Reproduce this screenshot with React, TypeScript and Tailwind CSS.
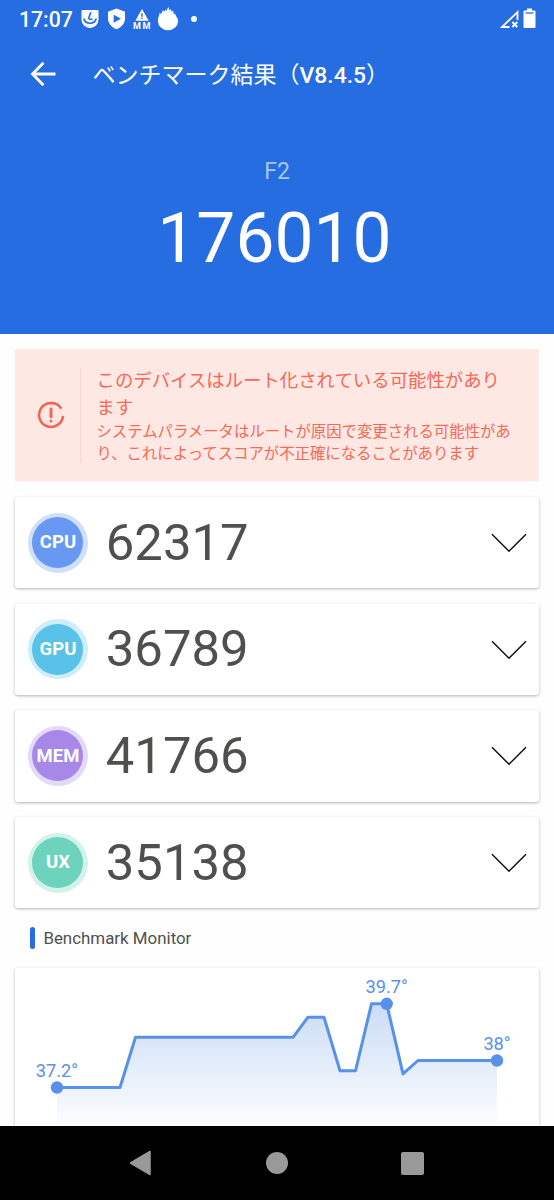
import React from 'react'

interface Score {
  label: string
  value: number
  ring: string
  fill: string
}

const scores: Score[] = [
  { label: 'CPU', value: 62317, ring: 'bg-[#d0dffa]', fill: 'bg-[#6799f2]' },
  { label: 'GPU', value: 36789, ring: 'bg-[#cdedf8]', fill: 'bg-[#59c2e9]' },
  { label: 'MEM', value: 41766, ring: 'bg-[#e3d9f8]', fill: 'bg-[#a787e7]' },
  { label: 'UX', value: 35138, ring: 'bg-[#d3f2ea]', fill: 'bg-[#6dd3bd]' },
]

const line = '42,119.5 105,119.5 120.5,69.3 278,69.3 293,49.2 309,49.2 325,102.8 340.5,102.8 356.5,35.8 371.7,35.8 388,105.8 403,92.5 482,92.5'

const markers = [
  { x: 42, y: 119.5, label: '37.2°' },
  { x: 371.7, y: 35.8, label: '39.7°' },
  { x: 482, y: 92.5, label: '38°' },
]

const StatusBar: React.FC = () => (
  <div className="flex h-[38px] items-center justify-between pl-[19px] pr-[18px] text-white">
    <div className="flex items-center">
      <span className="mt-px w-[54px] text-[21.2px] leading-none font-medium">17:07</span>
      <svg className="ml-2" width="18" height="20" viewBox="0 0 18 20">
        <path d="M1.500 1h15a1 1 0 0 1 1 1v8.500a8.500 8.500 0 0 1-17 0V2a1 1 0 0 1 1-1z" fill="#fff" />
        <path d="M9.800 3.200 8 8.200c-.5 1.700.5 2.200 3.400 2" fill="none" stroke="#256de0" strokeWidth="1.700" />
        <path d="M2.800 9.500c.6 3 3 4.700 6.200 4.700s5.600-1.700 6.200-4.700" fill="none" stroke="#256de0" strokeWidth="1.600" />
      </svg>
      <svg className="ml-[7.5px]" width="19" height="22" viewBox="0 0 19 22">
        <path d="M9.500.5 18 3.800v6.700c0 5-3.700 8.700-8.500 10.800C4.700 19.200 1 15.500 1 10.500V3.800z" fill="#fff" />
        <path d="M6.700 6.700v8l7.300-4z" fill="#256de0" />
      </svg>
      <span className="ml-[6px] flex flex-col items-center">
        <svg width="14" height="12" viewBox="0 0 14 12">
          <path d="M7 0 13.700 11.800H.3z" fill="#fff" />
          <path d="M7 4.200v3.500M7 8.700v1.400" stroke="#256de0" strokeWidth="1.500" />
        </svg>
        <span className="mt-px pl-[1.5px] text-[9px] leading-[8px] font-bold tracking-[1.5px]">MM</span>
      </span>
      <svg className="ml-[5.5px]" width="22" height="24" viewBox="0 0 22 24">
        <path d="M6 3 7.300 5 8.300 2.500l1 1.500L11.300 0l1.300 3.500L13.800 2l1 3 1.400-1.500.6 3.800 1.300-.8c.2 1.200.5 2 1.200 3 1.200 1.600 1.800 2.700 1.800 4.500A10.100 9.300 0 0 1 .9 14c0-2 .4-3.400 1.200-5.200L2.500 6l1.700 1z" fill="#fff" />
      </svg>
      <span className="ml-[12px] size-1.5 rounded-full bg-white" />
    </div>
    <div className="mb-px flex items-center gap-[3.5px]">
      <svg width="21" height="20" viewBox="0 0 21 20">
        <path d="M10.500 18H3L18.500 3v8" fill="none" stroke="#fff" strokeWidth="1.800" />
        <path d="m13.300 13 5 5m0-5-5 5" stroke="#fff" strokeWidth="1.900" />
      </svg>
      <svg width="13" height="21" viewBox="0 0 13 21">
        <path d="M4 .5h5v2h2.500a1 1 0 0 1 1 1V19a1 1 0 0 1-1 1h-10a1 1 0 0 1-1-1V3.500a1 1 0 0 1 1-1H4z" fill="#fff" />
        <path d="M2.500 5h8" stroke="#256de0" strokeWidth="1.300" />
      </svg>
    </div>
  </div>
)

const Header: React.FC = () => (
  <header className="h-[334px] shrink-0 bg-[#256de0]">
    <StatusBar />
    <div className="flex h-[72px] items-center pl-[30px] text-white">
      <svg width="26" height="26" viewBox="0 0 26 26" fill="none" stroke="#fff" strokeWidth="2.800">
        <path d="M25.500 13H3M13.500 1.800 2.500 13 13.500 24.200" />
      </svg>
      <h1 className="mt-[3px] ml-[36.5px] text-[23px] leading-none font-medium">
        <span className="font-normal">ベンチマーク結果（</span>
        <span className="text-[22.9px]">V8.4.5</span>
        <span className="font-normal">）</span>
      </h1>
    </div>
    <div className="flex flex-col items-center pt-[47px]">
      <span className="text-[23px] leading-[30px] text-[#a8c7f5]">F2</span>
      <span className="mt-[12px] mr-[5px] text-[69.5px] leading-[80px] text-white">176010</span>
    </div>
  </header>
)

const RootWarning: React.FC = () => (
  <section className="flex h-[132px] items-center bg-[#fee8e4] text-[#f86854]">
    <svg className="ml-[21.5px]" width="28" height="28" viewBox="0 0 28 28" fill="none" stroke="#f5624e" strokeLinecap="round">
      <path d="M24.300 7.700A12 12 0 1 0 26 14.800" strokeWidth="2.500" strokeLinecap="butt" />
      <path d="M14 8v8" strokeWidth="2.800" />
      <path d="M14 20v.1" strokeWidth="3" />
    </svg>
    <div className="ml-[15px] h-[95px] w-px bg-[#fbd4cd]" />
    <div className="mt-[3px] ml-[15.6px] whitespace-nowrap">
      <h2 className="text-[18.4px] leading-[26.5px]">
        このデバイスはルート化されている可能性があり<br />ます
      </h2>
      <p className="text-[15.38px] leading-[22.3px]">
        システムパラメータはルートが原因で変更される可能性があ<br />り、これによってスコアが不正確になることがあります
      </p>
    </div>
  </section>
)

const ScoreCard: React.FC<{ score: Score }> = ({ score }) => (
  <div className="flex h-[91.3px] items-center rounded-[3px] bg-white pl-[12.6px] pr-[12px] shadow-[0_1px_3px_rgba(0,0,0,0.3)]">
    <div className={`flex size-[60px] items-center justify-center rounded-full ${score.ring}`}>
      <div className={`flex size-[51px] items-center justify-center rounded-full text-[18.5px] font-bold text-white ${score.fill}`}>
        <span className="mt-px">{score.label}</span>
      </div>
    </div>
    <span className="mt-px ml-[17.8px] text-[50.8px] leading-none text-[#4f504e]">{score.value}</span>
    <svg className="mt-px ml-auto" width="36" height="20" viewBox="0 0 36 20" fill="none" stroke="#111" strokeWidth="1.500">
      <path d="M1 1.200 18 18.200 35 1.200" />
    </svg>
  </div>
)

const MonitorChart: React.FC = () => (
  <div className="h-[240px] rounded-[3px] bg-white shadow-[0_1px_3px_rgba(0,0,0,0.3)]">
    <svg width="523" height="170" viewBox="0 0 523 170">
      <defs>
        <linearGradient id="heat" x1="0" y1="35" x2="0" y2="165" gradientUnits="userSpaceOnUse">
          <stop offset="0" stopColor="#cbdcf6" />
          <stop offset="1" stopColor="#ffffff" />
        </linearGradient>
      </defs>
      <polygon points={`${line} 482,165 42,165`} fill="url(#heat)" />
      <polyline points={line} fill="none" stroke="#5891e9" strokeWidth="3" strokeLinejoin="round" />
      {markers.map((m) => (
        <g key={m.label} fill="#5891e9">
          <circle cx={m.x} cy={m.y} r="6.200" />
          <text x={m.x} y={m.y - 10.5} textAnchor="middle" fontSize="18.200">{m.label}</text>
        </g>
      ))}
    </svg>
  </div>
)

const NavBar: React.FC = () => (
  <nav className="flex h-[74px] shrink-0 items-center bg-black pl-[129px]">
    <svg width="22" height="26" viewBox="0 0 22 26">
      <path d="M1.500 13 21 1.500v23z" fill="#999" stroke="#999" strokeWidth="1.500" strokeLinejoin="round" />
    </svg>
    <span className="ml-[115px] size-[22px] rounded-full bg-[#999]" />
    <span className="ml-[113px] size-[23px] rounded-[2px] bg-[#999]" />
  </nav>
)

export default function App() {
  return (
    <div className="flex h-[1200px] w-[554px] flex-col overflow-hidden bg-[#fefefe] font-[Roboto,'Noto_Sans_CJK_JP',sans-serif]">
      <Header />
      <main className="min-h-0 flex-1 overflow-hidden px-[15.4px] pt-[15.3px]">
        <RootWarning />
        <div className="mt-[15.6px] flex flex-col gap-[15.4px]">
          {scores.map((score) => (
            <ScoreCard key={score.label} score={score} />
          ))}
        </div>
        <div className="flex h-[59.6px] items-center pl-[15px]">
          <span className="h-[22px] w-[5px] rounded-full bg-[#256de0]" />
          <h3 className="mt-px ml-2 text-[16.9px] leading-none text-[#505050]">Benchmark Monitor</h3>
        </div>
        <MonitorChart />
      </main>
      <NavBar />
    </div>
  )
}
